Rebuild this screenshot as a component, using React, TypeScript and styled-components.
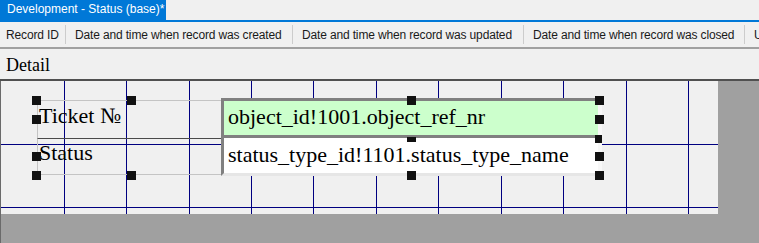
import React from "react";
import styled, { createGlobalStyle } from "styled-components";

const Global = createGlobalStyle`
  html, body { margin: 0; padding: 0; background: #f0f0f0; }
  body { width: 759px; height: 243px; overflow: hidden; }
`;

const UI = `"Liberation Sans", Arial, sans-serif`;
const SERIF = `"Liberation Serif", "Times New Roman", serif`;

const Page = styled.div`
  display: flex;
  flex-direction: column;
  width: 759px;
  height: 243px;
`;

const TabStrip = styled.div`
  display: flex;
  height: 20px;
  border-bottom: 2px solid #0078d7;
  background: #f0f0f0;
`;

const Tab = styled.div`
  background: #0078d7;
  color: #fff;
  font-family: ${UI};
  font-size: 12px;
  line-height: 19px;
  padding: 0 5px 0 7px;
  width: 154px;
  white-space: nowrap;
`;

const Toolbar = styled.div`
  display: flex;
  align-items: center;
  height: 25px;
  padding-left: 6px;
  border-bottom: 2px solid #a0a0a0;
  overflow: hidden;
  white-space: nowrap;
`;

const Column = styled.div<{ $w: number }>`
  font-family: ${UI};
  font-size: 12px;
  letter-spacing: -0.15px;
  color: #1a1a1a;
  width: ${(p) => p.$w}px;
  flex: none;
  overflow: hidden;
`;

const Sep = styled.div`
  width: 1px;
  height: 19px;
  background: #cccccc;
  margin-right: 9px;
  flex: none;
`;

const Band = styled.div`
  height: 32px;
  box-sizing: border-box;
  border-bottom: 2px solid #505050;
  font-family: ${SERIF};
  font-size: 18px;
  line-height: 20px;
  padding: 6px 0 0 6px;
  color: #000;
`;

const Workspace = styled.div`
  flex: 1;
  background: #a0a0a0;
  border-left: 1px solid #6a6a6a;
`;

const Canvas = styled.div`
  position: relative;
  width: 717px;
  height: 133px;
  background: #f0f0f0;
`;

const Grid = styled.svg`
  position: absolute;
  left: 0;
  top: 0;
`;

const Label = styled.div<{ $top: number; $h: number; $dark?: boolean }>`
  position: absolute;
  left: 36px;
  top: ${(p) => p.$top}px;
  width: 185px;
  height: ${(p) => p.$h}px;
  box-sizing: border-box;
  border: 1px solid #c4c4c4;
  border-top-color: ${(p) => (p.$dark ? "#4a4a4a" : "#c4c4c4")};
  ${(p) => (p.$dark ? "border-bottom: 1px solid #c4c4c4;" : "border-bottom: none;")}
  font-family: ${SERIF};
  font-size: 22px;
  line-height: 25px;
  padding: ${(p) => (p.$dark ? 1 : 2)}px 0 0 1px;
  color: #000;
  white-space: nowrap;
`;

const Field = styled.div<{ $top: number; $h: number; $bg: string; $first?: boolean }>`
  position: absolute;
  left: 220px;
  top: ${(p) => p.$top}px;
  width: 381px;
  height: ${(p) => p.$h}px;
  box-sizing: border-box;
  background: ${(p) => p.$bg};
  border-left: 3px solid #808080;
  border-top: ${(p) => (p.$first ? "3px solid #808080" : "none")};
  border-bottom: ${(p) => (p.$first ? "3px solid #808080" : "3px solid #e6e6e6")};
  border-right: 4px solid #f8f8f8;
  font-family: ${SERIF};
  font-size: 22px;
  line-height: 25px;
  padding: ${(p) => (p.$first ? 3 : 4)}px 0 0 4px;
  color: #000;
  white-space: nowrap;
`;

const Handle = styled.div<{ $x: number; $y: number; $w?: number; $h?: number }>`
  position: absolute;
  left: ${(p) => p.$x}px;
  top: ${(p) => p.$y}px;
  width: ${(p) => p.$w ?? 9}px;
  height: ${(p) => p.$h ?? 9}px;
  background: #111;
`;

const columns = [
  { text: "Record ID", w: 59 },
  { text: "Date and time when record was created", w: 217 },
  { text: "Date and time when record was updated", w: 221 },
  { text: "Date and time when record was closed", w: 211 },
  { text: "Updated by", w: 80 },
];

const vLines = [63, 125, 188, 250, 312, 375, 437, 500, 562, 625, 687];
const hLines = [63, 126];

const handles = [
  { x: 31, y: 15 },
  { x: 31, y: 34 },
  { x: 31, y: 71 },
  { x: 31, y: 90 },
  { x: 126, y: 15 },
  { x: 126, y: 90 },
  { x: 406, y: 15 },
  { x: 406, y: 56, h: 5 },
  { x: 406, y: 90 },
  { x: 594, y: 15 },
  { x: 594, y: 34 },
  { x: 594, y: 54, w: 7, h: 8 },
  { x: 594, y: 71 },
  { x: 594, y: 90 },
];

export default function App() {
  return (
    <Page>
      <Global />
      <TabStrip>
        <Tab>Development - Status (base)*</Tab>
      </TabStrip>
      <Toolbar>
        {columns.map((c, i) => (
          <React.Fragment key={c.text}>
            {i > 0 && <Sep />}
            <Column $w={c.w}>{c.text}</Column>
          </React.Fragment>
        ))}
      </Toolbar>
      <Band>Detail</Band>
      <Workspace>
        <Canvas>
          <Grid width={717} height={133}>
            {vLines.map((x) => (
              <rect key={"v" + x} x={x} y={0} width={1} height={133} fill="#000080" />
            ))}
            {hLines.map((y) => (
              <rect key={"h" + y} x={0} y={y} width={717} height={1} fill="#000080" />
            ))}
          </Grid>
          <Label $top={19} $h={38}>Ticket №</Label>
          <Label $top={57} $h={37} $dark>Status</Label>
          <Field $top={17} $h={40} $bg="#ccffcc" $first>
            object_id!1001.object_ref_nr
          </Field>
          <Field $top={57} $h={38} $bg="#ffffff">
            status_type_id!1101.status_type_name
          </Field>
          {handles.map((h, i) => (
            <Handle key={i} $x={h.x} $y={h.y} $w={h.w} $h={h.h} />
          ))}
        </Canvas>
      </Workspace>
    </Page>
  );
}
